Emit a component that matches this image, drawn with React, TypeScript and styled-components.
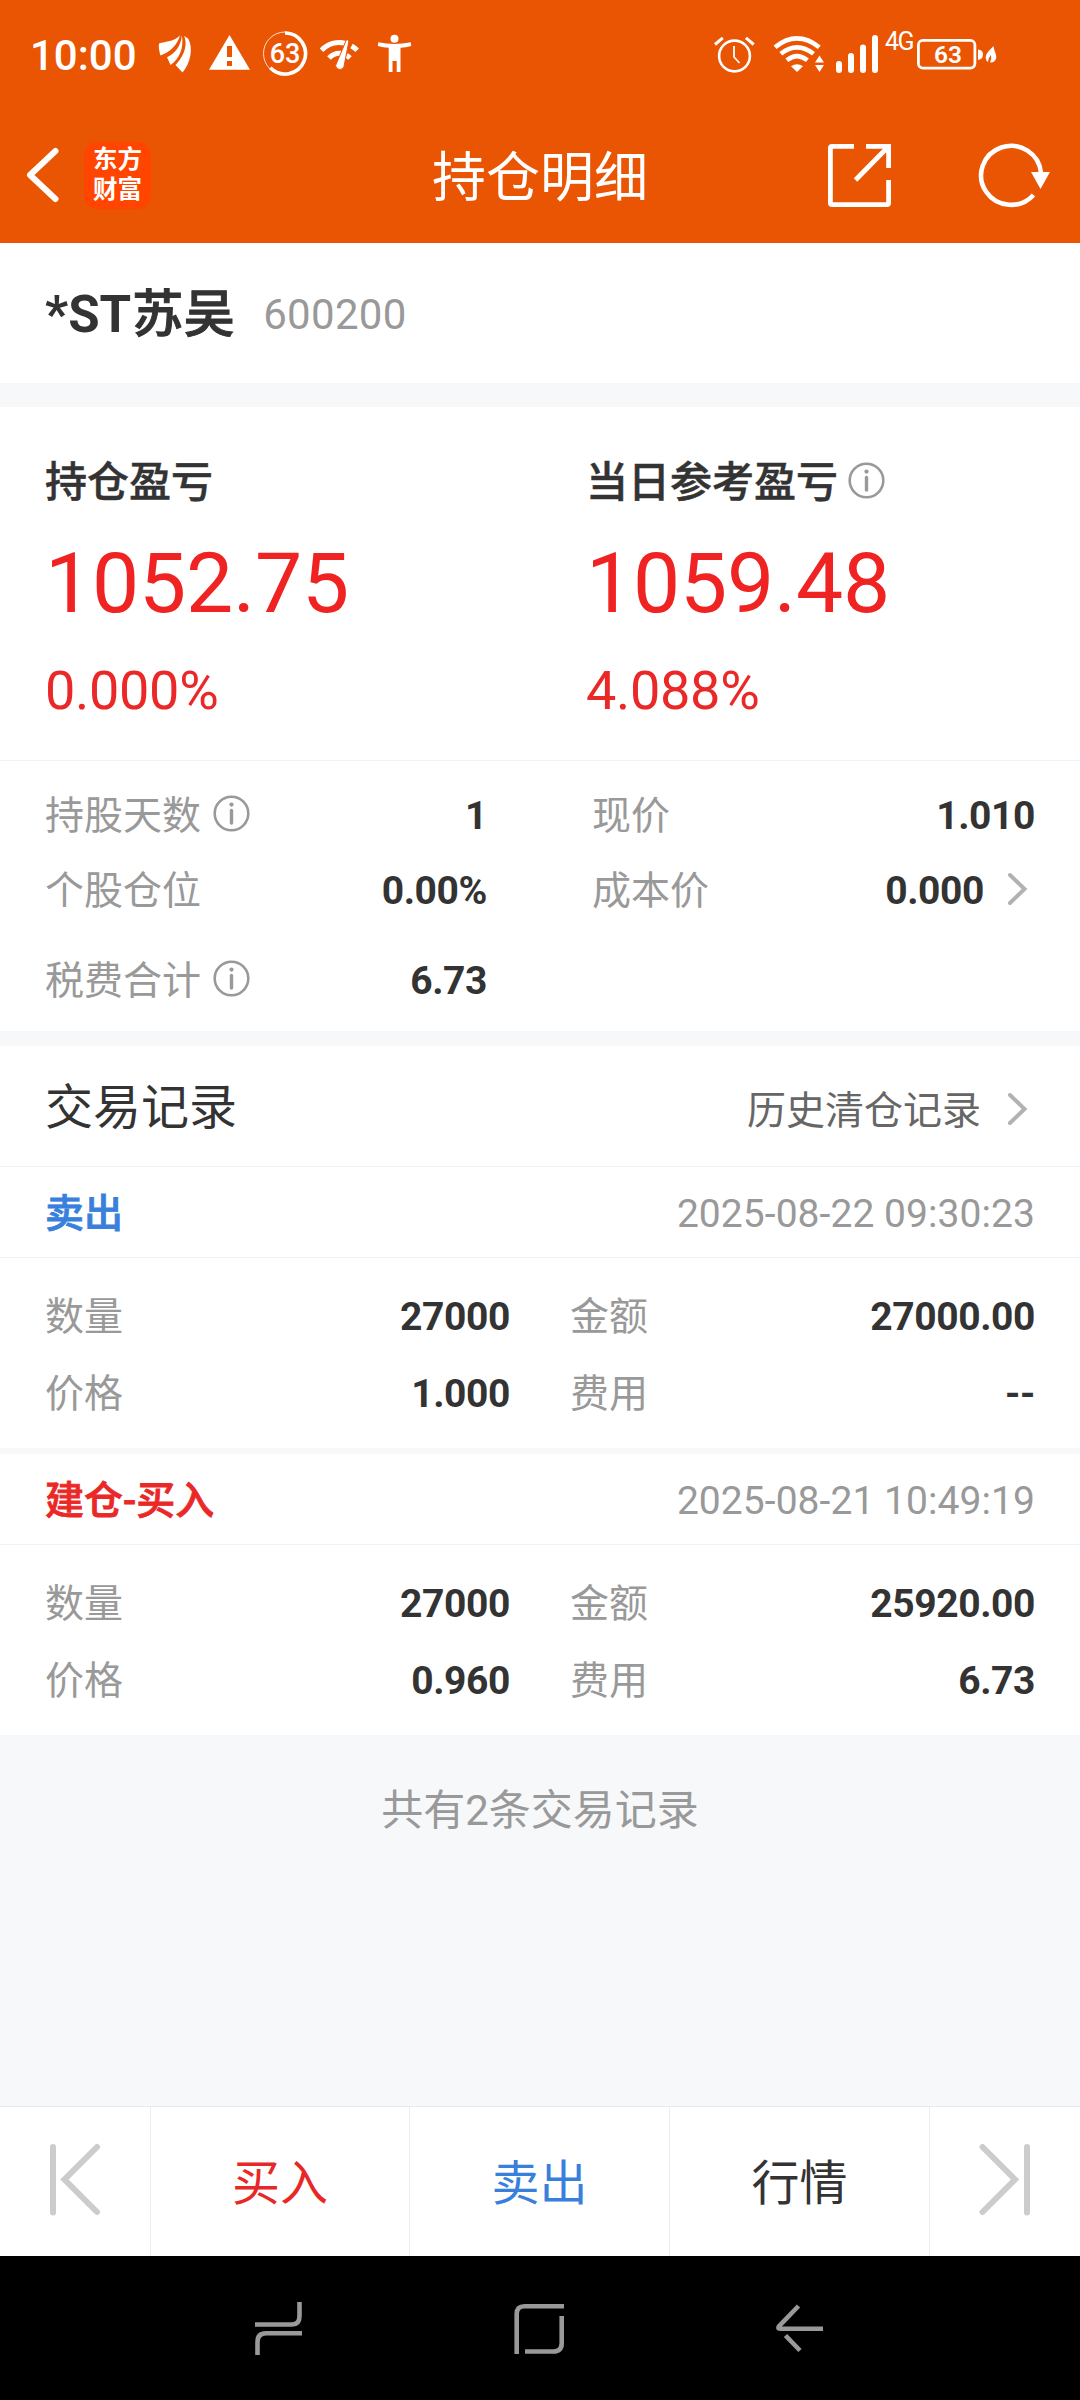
import React from "react";
import styled, { createGlobalStyle } from "styled-components";

const GlobalStyle = createGlobalStyle`
  * { box-sizing: border-box; }
  body {
    margin: 0;
    background: #f7f8fa;
    font-family: Roboto, "Noto Sans CJK SC", sans-serif;
    color: #333;
  }
`;

const Screen = styled.div`
  width: 1080px;
  height: 2400px;
  display: flex;
  flex-direction: column;
  overflow: hidden;
`;

const Header = styled.header`
  height: 243px;
  background: #ea5504;
  color: #fff;
`;

const StatusBar = styled.div`
  height: 107px;
  padding: 0 80px 0 30px;
  display: flex;
  align-items: center;
  justify-content: space-between;
`;

const StatusGroup = styled.div`
  display: flex;
  align-items: center;
`;

const Clock = styled.span`
  width: 124px;
  padding-top: 4px;
  font-size: 42px;
  font-weight: 500;
  line-height: 48px;
`;

const Drawing = styled.svg`
  display: block;
  flex: none;
`;

const NetworkType = styled.span`
  width: 30px;
  margin-top: -23px;
  font-size: 25px;
  font-weight: 400;
  line-height: 24px;
  letter-spacing: -1.5px;
`;

const NavBar = styled.div`
  height: 136px;
  display: grid;
  grid-template-columns: 300px 1fr 300px;
  align-items: center;
`;

const NavLeft = styled.div`
  display: flex;
  align-items: center;
  padding-left: 24px;
  gap: 23px;
`;

const AppBadge = styled.div`
  width: 67px;
  height: 67px;
  border-radius: 14px;
  background: #ff4500;
  display: flex;
  flex-direction: column;
  align-items: center;
  justify-content: center;
  font-size: 24.5px;
  font-weight: 700;
  line-height: 30px;
`;

const Title = styled.h1`
  margin: 0;
  padding-top: 8px;
  text-align: center;
  font-size: 54px;
  font-weight: 400;
  line-height: 70px;
`;

const NavRight = styled.div`
  display: flex;
  justify-content: flex-end;
  padding-right: 27px;
  gap: 84px;
`;

const StockBar = styled.section`
  height: 140px;
  padding: 4px 45px 0;
  background: #fff;
  display: flex;
  align-items: center;
  gap: 28px;
`;

const StockName = styled.span`
  font-size: 51px;
  font-weight: 700;
  line-height: 60px;

  & > span {
    margin-left: 1px;
    font-weight: 500;
    letter-spacing: 0.5px;
    -webkit-text-stroke: 1px #333;
  }
`;

const StockCode = styled.span`
  font-size: 42px;
  line-height: 50px;
  letter-spacing: 0.3px;
  color: #999;
`;

const Band = styled.div<{ $h: number }>`
  flex: none;
  height: ${(p) => p.$h}px;
  background: #f7f8fa;
`;

const Profit = styled.section`
  height: 354px;
  padding: 46px 0 0 45px;
  background: #fff;
  border-bottom: 1px solid #f2f3f4;
  display: grid;
  grid-template-columns: 541px 1fr;
`;

const ProfitLabel = styled.div`
  height: 60px;
  display: flex;
  align-items: center;
  gap: 10px;
  font-size: 42px;
  font-weight: 500;
  line-height: 60px;
  -webkit-text-stroke: 0.5px #333;
`;

const ProfitAmount = styled.div`
  margin-top: 21px;
  font-size: 84px;
  line-height: 100px;
  letter-spacing: -0.2px;
  color: #f02323;
`;

const ProfitRate = styled.div`
  margin-top: 27px;
  font-size: 54px;
  line-height: 60px;
  letter-spacing: -0.3px;
  color: #ea2828;
`;

const Stats = styled.section`
  height: 270px;
  padding: 17px 45px 0;
  background: #fff;
  display: grid;
  grid-template-columns: 442px 443px;
  grid-template-rows: 75px 75px 75px;
  column-gap: 105px;

  & > :nth-child(5) {
    margin-top: 15px;
    height: 75px;
  }
`;

const Pair = styled.div`
  display: flex;
  align-items: center;
  font-size: 39px;
  line-height: 50px;
`;

const Label = styled.span`
  display: flex;
  align-items: center;
  gap: 12px;
  color: #999;
`;

const Value = styled.span`
  flex: 1;
  text-align: right;
  font-weight: 700;
  letter-spacing: -0.4px;
  color: #333;
`;

const InfoSvg = styled.svg`
  display: block;
  margin-top: -5px;
`;

const ChevronSvg = styled.svg`
  display: block;
  margin: -4px 7px 0 22px;
`;

const RecordsHead = styled.div`
  height: 121px;
  padding: 4px 45px 0;
  background: #fff;
  border-bottom: 1px solid #f2f3f4;
  display: flex;
  align-items: center;
  justify-content: space-between;
`;

const RecordsTitle = styled.h2`
  margin: 0;
  font-size: 48px;
  font-weight: 400;
  line-height: 60px;
`;

const HistoryLink = styled.a`
  padding-top: 5px;
  display: flex;
  align-items: center;
  gap: 3px;
  font-size: 39px;
  line-height: 50px;
  color: #666;
`;

const Record = styled.article`
  background: #fff;
`;

const RecordHead = styled.div`
  height: 91px;
  padding: 3px 45px 0;
  border-bottom: 1px solid #f2f3f4;
  display: flex;
  align-items: center;
  justify-content: space-between;
  font-size: 39px;
  line-height: 50px;
`;

const Side = styled.span<{ $sell: boolean }>`
  font-weight: 500;
  -webkit-text-stroke: 0.8px;
  color: ${(p) => (p.$sell ? "#3880dc" : "#ea2828")};
`;

const Stamp = styled.time`
  letter-spacing: 0.06px;
  color: #999;
`;

const RecordBody = styled.div`
  height: 190px;
  padding: 20px 45px 0;
  display: grid;
  grid-template-columns: 465px 465px;
  grid-template-rows: 77px 77px;
  column-gap: 60px;
`;

const Summary = styled.p`
  flex: 1;
  margin: 0;
  padding-top: 46px;
  text-align: center;
  font-size: 42px;
  line-height: 60px;
  color: #999;
`;

const Toolbar = styled.nav`
  height: 150px;
  background: #fff;
  border-top: 1px solid #e9eaec;
  display: grid;
  grid-template-columns: 150px 259px 260px 260px 151px;
`;

const Tool = styled.button<{ $color?: string }>`
  padding: 0 0 4px;
  border: 0;
  border-left: 1px solid #ededee;
  background: none;
  display: flex;
  align-items: center;
  justify-content: center;
  font: 400 48px/60px Roboto, "Noto Sans CJK SC", sans-serif;
  color: ${(p) => p.$color || "#333"};

  &:first-child {
    border-left: 0;
    padding-right: 2px;
  }

  & > span {
    padding-top: 8px;
  }
`;

const SystemNav = styled.footer`
  height: 144px;
  padding: 2px 2px 0 0;
  background: #000;
  display: flex;
  align-items: center;
  justify-content: center;
  gap: 200px;
`;

/* Every drawing keeps the coordinates of the 1080-wide screen in its viewBox. */
function Art({ x, y, w, h, children }: { x: number; y: number; w: number; h: number; children: React.ReactNode }) {
  return (
    <Drawing width={w} height={h} viewBox={`${x} ${y} ${w} ${h}`} fill="none">
      {children}
    </Drawing>
  );
}

function Info() {
  return (
    <InfoSvg width="37" height="37" viewBox="0 0 37 37" fill="none">
      <circle cx="18.5" cy="18.5" r="16.8" stroke="#999" strokeWidth="2.6" />
      <circle cx="18.5" cy="9.6" r="2.1" fill="#999" />
      <path d="M18.5 15.5V28" stroke="#999" strokeWidth="3.4" strokeLinecap="round" />
    </InfoSvg>
  );
}

function Chevron() {
  return (
    <ChevronSvg width="22" height="36" viewBox="0 0 22 36" fill="none">
      <path d="M4 4L18.5 18L4 32" stroke="#b2b2b2" strokeWidth="4" strokeLinecap="round" />
    </ChevronSvg>
  );
}

function StatusIconsLeft() {
  return (
    <>
      <Art x={154} y={31} w={46} h={45}>
        <g fill="#fff">
          <path d="M159 43.5C166 41 174 42 180 35.2C177.5 45 170 52 160.5 55.5C159 51 158.5 47 159 43.5Z" />
          <path d="M181.8 35.2C181 46 175 53.5 167 57.2L170.5 65C178.5 60 184.5 48 181.8 35.2Z" />
          <path d="M184.2 36C188.5 47 182 58.5 175.5 65L182.5 72.5C190.5 63.5 193.5 48 188.3 38.8Z" />
        </g>
      </Art>
      <Art x={200} y={31} w={58} h={45}>
        <path fill="#fff" fillRule="evenodd" d="M229.5 35L250 69.8H209ZM227 46V57H232V46ZM227 61V66H232V61Z" />
      </Art>
      <Art x={258} y={31} w={54} h={45}>
        <circle cx="285" cy="53.5" r="21.5" stroke="#fff" strokeOpacity=".8" strokeWidth="1" />
        <path d="M285 33A20.5 20.5 0 1 1 270.3 67.8" stroke="#fff" strokeWidth="3.6" />
        <text x="285" y="63" textAnchor="middle" fontSize="27" fontWeight="500" fill="#fff">63</text>
      </Art>
      <Art x={312} y={31} w={56} h={45}>
        <path d="M321.5 50.3A24.6 24.6 0 0 1 345.5 43.3M351.5 46A24.6 24.6 0 0 1 357.2 50.3" stroke="#fff" strokeWidth="5" />
        <path d="M329 58A14.5 14.5 0 0 1 341 53.2M346.5 55.5A14.5 14.5 0 0 1 350 58" stroke="#fff" strokeWidth="5" />
        <path d="M346.5 39.5L349 40.5L344 66.5A4.3 4.3 0 0 1 335.6 65.5Z" fill="#fff" stroke="#ea5504" strokeWidth="1" />
      </Art>
      <Art x={368} y={31} w={52} h={45}>
        <circle cx="394.5" cy="38.7" r="4" fill="#fff" />
        <path fill="#fff" d="M378.3 42.3Q394.5 45.5 410.7 42.3L411.2 46Q406 47.4 400.5 47.8V72H396.7V61H392.5V72H388.7V47.8Q383 47.4 377.8 46Z" />
      </Art>
    </>
  );
}

function StatusIconsRight() {
  return (
    <>
      <Art x={708} y={31} w={56} h={45}>
        <g stroke="#fff" strokeWidth="2.6">
          <circle cx="734.5" cy="56" r="15.4" />
          <path d="M734 46V57L739.5 63" strokeWidth="1.8" />
          <path d="M715 44.5L722.8 37.8M753.7 44.5L745.9 37.8" strokeWidth="3" />
        </g>
      </Art>
      <Art x={764} y={31} w={66} h={45}>
        <g stroke="#fff" strokeWidth="4.6">
          <path d="M775 47.3Q797 29.6 819.3 47.3" />
          <path d="M780.8 53.8Q797 40.8 813.5 53.8" />
          <path d="M786.8 60.3Q797 52 807.4 60.3" />
        </g>
        <path d="M791 66.3Q797 62 803 66.3L797 72Z" fill="#fff" />
        <path d="M815 62.5L819.5 55.5L824 62.5ZM815 65L819.5 72L824 65Z" fill="#fff" />
      </Art>
      <Art x={830} y={31} w={55} h={45}>
        <path d="M839 64V70M851 56V70M863 47.5V70M875 38V70" stroke="#fff" strokeWidth="6" strokeLinecap="round" />
      </Art>
      <NetworkType>4G</NetworkType>
      <Art x={915} y={31} w={85} h={45}>
        <rect x="918.4" y="40.4" width="56.5" height="27.7" rx="4.5" stroke="#fff" strokeWidth="2.8" />
        <text x="948" y="62.5" textAnchor="middle" fontSize="24.5" fontWeight="600" fill="#fff">63</text>
        <path d="M978 49.5Q983 50 983 54.5T978 60Z" fill="#fff" />
        <path d="M993.5 46C990 50 985.5 53.5 985.7 58Q986 61 988 62Q988 58 991 55Q991.8 58.5 990 62.5Q995 62.8 996.2 58C996.7 54 994 51 993.5 46Z" fill="#fff" />
      </Art>
    </>
  );
}

const stats = [
  { label: "持股天数", value: "1", info: true },
  { label: "现价", value: "1.010" },
  { label: "个股仓位", value: "0.00%" },
  { label: "成本价", value: "0.000", more: true },
  { label: "税费合计", value: "6.73", info: true },
];

const records = [
  {
    side: "卖出",
    sell: true,
    time: "2025-08-22 09:30:23",
    fields: [["数量", "27000"], ["金额", "27000.00"], ["价格", "1.000"], ["费用", "--"]],
  },
  {
    side: "建仓-买入",
    sell: false,
    time: "2025-08-21 10:49:19",
    fields: [["数量", "27000"], ["金额", "25920.00"], ["价格", "0.960"], ["费用", "6.73"]],
  },
];

export default function App() {
  return (
    <Screen lang="zh-CN">
      <GlobalStyle />
      <Header>
        <StatusBar>
          <StatusGroup>
            <Clock>10:00</Clock>
            <StatusIconsLeft />
          </StatusGroup>
          <StatusGroup>
            <StatusIconsRight />
          </StatusGroup>
        </StatusBar>
        <NavBar>
          <NavLeft>
            <Art x={24} y={145} w={37} h={60}>
              <path d="M55.5 151L30 175L55.5 199" stroke="#fff" strokeWidth="6" strokeLinecap="round" strokeLinejoin="round" />
            </Art>
            <AppBadge>
              <span>东方</span>
              <span>财富</span>
            </AppBadge>
          </NavLeft>
          <Title>持仓明细</Title>
          <NavRight>
            <Art x={826} y={141} w={67} h={68}>
              <g stroke="#fff" strokeWidth="4.8">
                <path d="M854 146.4H832Q830.4 146.4 830.4 148V203Q830.4 204.6 832 204.6H887Q888.6 204.6 888.6 203V180" />
                <path d="M866 146.4H888.6V168M855.5 180L888 147" />
              </g>
            </Art>
            <Art x={977} y={141} w={76} h={68}>
              <path d="M1033.5 195A30 29.5 0 1 1 1041 173" stroke="#fff" strokeWidth="4.6" />
              <path d="M1031 172H1050L1040.5 189Z" fill="#fff" />
            </Art>
          </NavRight>
        </NavBar>
      </Header>

      <StockBar>
        <StockName>*ST<span>苏吴</span></StockName>
        <StockCode>600200</StockCode>
      </StockBar>
      <Band $h={24} />

      <Profit>
        <div>
          <ProfitLabel>持仓盈亏</ProfitLabel>
          <ProfitAmount>1052.75</ProfitAmount>
          <ProfitRate>0.000%</ProfitRate>
        </div>
        <div>
          <ProfitLabel>当日参考盈亏<Info /></ProfitLabel>
          <ProfitAmount>1059.48</ProfitAmount>
          <ProfitRate>4.088%</ProfitRate>
        </div>
      </Profit>

      <Stats>
        {stats.map((s) => (
          <Pair key={s.label}>
            <Label>{s.label}{s.info && <Info />}</Label>
            <Value>{s.value}</Value>
            {s.more && <Chevron />}
          </Pair>
        ))}
      </Stats>
      <Band $h={15} />

      <RecordsHead>
        <RecordsTitle>交易记录</RecordsTitle>
        <HistoryLink>历史清仓记录<Chevron /></HistoryLink>
      </RecordsHead>
      {records.map((r, i) => (
        <React.Fragment key={r.time}>
          {i > 0 && <Band $h={6} />}
          <Record>
            <RecordHead>
              <Side $sell={r.sell}>{r.side}</Side>
              <Stamp>{r.time}</Stamp>
            </RecordHead>
            <RecordBody>
              {r.fields.map(([label, value]) => (
                <Pair key={label}>
                  <Label>{label}</Label>
                  <Value>{value}</Value>
                </Pair>
              ))}
            </RecordBody>
          </Record>
        </React.Fragment>
      ))}
      <Summary>共有2条交易记录</Summary>

      <Toolbar>
        <Tool>
          <Art x={44} y={2141} w={60} h={77}>
            <path d="M53 2147V2212.5M97 2147L64.5 2179.5L97 2212" stroke="#ccc" strokeWidth="6" strokeLinecap="round" />
          </Art>
        </Tool>
        <Tool $color="#e82828"><span>买入</span></Tool>
        <Tool $color="#3880dc"><span>卖出</span></Tool>
        <Tool><span>行情</span></Tool>
        <Tool>
          <Art x={975} y={2141} w={60} h={77}>
            <path d="M1027 2147V2212.5M982.5 2147L1015 2179.5L982.5 2212" stroke="#ccc" strokeWidth="6" strokeLinecap="round" />
          </Art>
        </Tool>
      </Toolbar>
      <SystemNav>
        <Art x={249} y={2300} w={60} h={58}>
          <path d="M299.5 2302V2316Q299.5 2324.5 292 2324.5H255M302 2333.2H266Q257.5 2333.2 257.5 2342V2355" stroke="#999" strokeWidth="4.6" />
        </Art>
        <Art x={509} y={2300} w={60} h={58}>
          <path d="M516.7 2354V2314Q516.7 2306.3 524.5 2306.3H564M561.7 2316V2343Q561.7 2351.5 553.5 2351.5H525" stroke="#999" strokeWidth="4.6" />
        </Art>
        <Art x={769} y={2300} w={60} h={58}>
          <path d="M798.5 2306L778.8 2326.5Q777.3 2328.8 780 2328.8H823M785.5 2335.5L800 2350.5" stroke="#999" strokeWidth="4.6" />
        </Art>
      </SystemNav>
    </Screen>
  );
}
